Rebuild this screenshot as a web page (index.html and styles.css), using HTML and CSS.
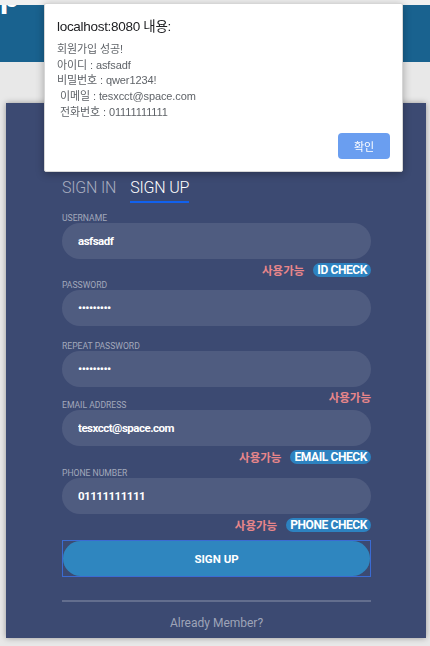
FILE: index.html
```html
<!DOCTYPE html>
<html lang="ko">
<head>
<meta charset="utf-8">
<title>Sign Up</title>
<link rel="stylesheet" href="styles.css">
</head>
<body>
<div class="topstrip"></div>
<header class="hero"><h1 class="hero-title">Sign Up</h1></header>

<main class="card">
  <div class="tabs">
    <span class="tab">SIGN IN</span>
    <span class="tab active">SIGN UP</span>
  </div>

  <div class="field first">
    <label class="label">USERNAME</label>
    <input class="input" type="text" value="asfsadf">
    <div class="status row-id"><span class="ok">사용가능</span><span class="badge">ID CHECK</span></div>
  </div>

  <div class="field">
    <label class="label">PASSWORD</label>
    <input class="input" type="password" value="qwer1234!">
    <div class="status row-empty"></div>
  </div>

  <div class="field">
    <label class="label">REPEAT PASSWORD</label>
    <input class="input" type="password" value="qwer1234!">
    <div class="status row-text"><span class="ok low">사용가능</span></div>
  </div>

  <div class="field">
    <label class="label">EMAIL ADDRESS</label>
    <input class="input" type="text" value="tesxcct@space.com">
    <div class="status row-badge"><span class="ok">사용가능</span><span class="badge">EMAIL CHECK</span></div>
  </div>

  <div class="field">
    <label class="label">PHONE NUMBER</label>
    <input class="input" type="text" value="01111111111">
    <div class="status row-badge"><span class="ok">사용가능</span><span class="badge">PHONE CHECK</span></div>
  </div>

  <div class="submit-wrap"><button class="submit" type="button">SIGN UP</button></div>

  <div class="hr"></div>
  <p class="foot">Already Member?</p>
</main>

<div class="dialog">
  <div class="dialog-title">localhost:8080 내용:</div>
  <div class="dialog-body">회원가입 성공!
아이디 : asfsadf
비밀번호 : qwer1234!
 이메일 : tesxcct@space.com
 전화번호 : 01111111111</div>
  <div class="dialog-foot"><button class="dialog-btn" type="button">확인</button></div>
</div>
</body>
</html>
```

FILE: styles.css
```css
* { box-sizing: border-box; }

body {
  margin: 0;
  background: #e8e8e8;
  font-family: Roboto, "Noto Sans CJK KR", sans-serif;
  height: 646px;
  overflow: hidden;
}

.topstrip {
  height: 5px;
  background: #f0f0f0;
}

.hero {
  height: 57px;
  background: #19628f;
  overflow: hidden;
}

.hero-title {
  margin: -26px 0 0 -105px;
  font-family: "Liberation Sans", Arial, sans-serif;
  font-weight: 700;
  font-size: 33px;
  line-height: 34px;
  color: #fff;
  white-space: nowrap;
}

.card {
  margin: 41px 0 0 6px;
  width: 420px;
  background: #3c4a72;
  box-shadow: 0 0 6px rgba(0, 0, 0, 0.35);
  padding: 75px 55px 6px 56px;
}

.tabs {
  display: flex;
  gap: 14px;
}

.tab {
  font-size: 16px;
  line-height: 20px;
  font-weight: 300;
  color: #a9aec0;
  padding-bottom: 3px;
  border-bottom: 2px solid transparent;
  letter-spacing: -0.2px;
}

.tab.active {
  color: #fff;
  border-bottom-color: #1161ee;
}

.field {
  display: flex;
  flex-direction: column;
}

.field.first { margin-top: 10px; }

.label {
  font-size: 8.6px;
  line-height: 10px;
  color: #a2a8bb;
  text-transform: uppercase;
}

.input {
  height: 36px;
  width: 100%;
  border: none;
  border-radius: 18px;
  background: rgba(255, 255, 255, 0.1);
  padding: 0 16px;
  font-family: Roboto, sans-serif;
  font-weight: 700;
  font-size: 11.5px;
  letter-spacing: -0.5px;
  color: #fff;
  outline: none;
}

.status {
  display: flex;
  justify-content: flex-end;
  align-items: center;
  gap: 9px;
}

.row-id { height: 21px; }
.row-badge { height: 22px; }
.row-empty { height: 15px; }
.row-text { height: 13px; align-items: flex-end; }

.ok {
  font-family: "Noto Sans CJK KR", sans-serif;
  font-weight: 700;
  font-size: 11.5px;
  line-height: 14px;
  color: #e8868a;
}

.ok.low { margin-bottom: -4px; }

.badge {
  height: 14px;
  line-height: 14px;
  padding: 0 4px;
  border-radius: 7px;
  background: #2d82c0;
  color: #fff;
  font-weight: 700;
  font-size: 12px;
  letter-spacing: -0.4px;
}

.submit-wrap {
  margin-top: 4px;
  border: 1px solid #3b6bd3;
  height: 37px;
  display: flex;
}

.submit {
  flex: 1;
  border: none;
  border-radius: 18px;
  background: #2f86bf;
  color: #fff;
  font-family: Roboto, sans-serif;
  font-weight: 700;
  font-size: 11.5px;
}

.hr {
  margin-top: 23px;
  height: 2px;
  background: rgba(255, 255, 255, 0.2);
}

.foot {
  margin: 12px 0 0;
  text-align: center;
  font-size: 12px;
  line-height: 18px;
  color: #9ea4b8;
}

.dialog {
  position: fixed;
  left: 44px;
  top: 3px;
  width: 359px;
  height: 169px;
  background: #fff;
  border: 1px solid #d6d6d6;
  border-radius: 2px;
  box-shadow: 0 2px 8px rgba(0, 0, 0, 0.3);
  padding: 13px 12px 12px 12px;
  font-family: "Liberation Sans", "Noto Sans CJK KR", sans-serif;
}

.dialog-title {
  font-size: 13.5px;
  line-height: 20px;
  letter-spacing: -0.3px;
  color: #202124;
}

.dialog-body {
  margin-top: 5px;
  white-space: pre;
  font-size: 11px;
  line-height: 15.7px;
  letter-spacing: -0.1px;
  color: #5f6368;
}

.dialog-foot {
  margin-top: 12px;
  display: flex;
  justify-content: flex-end;
}

.dialog-btn {
  width: 52px;
  height: 26px;
  border: none;
  border-radius: 4px;
  background: #6a9ef0;
  color: #fff;
  font-family: "Noto Sans CJK KR", sans-serif;
  font-size: 11px;
}
```
